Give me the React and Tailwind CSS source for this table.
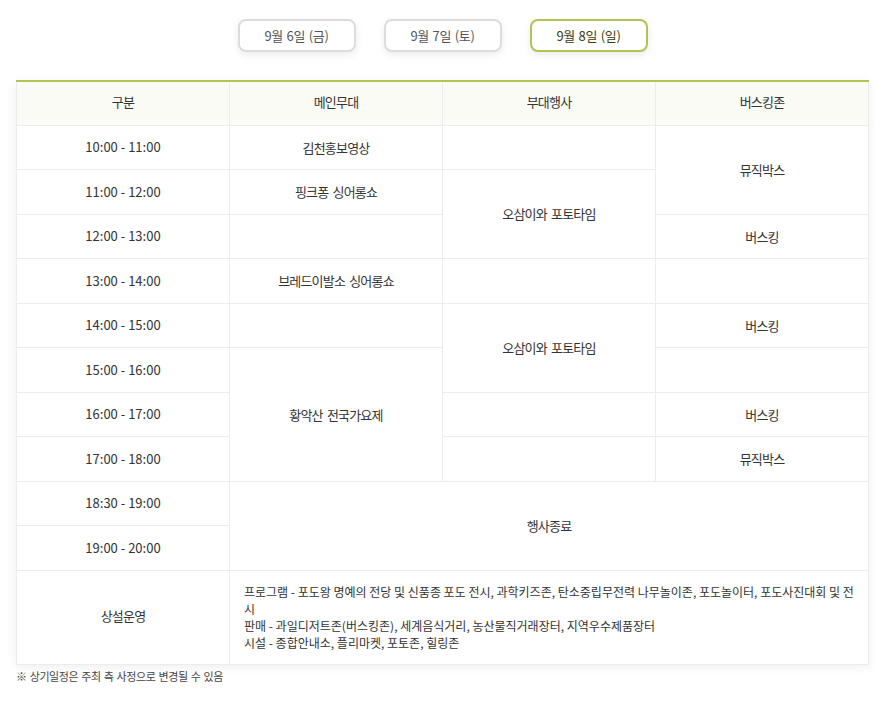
const days = [
  { label: '9월 6일 (금)', active: false },
  { label: '9월 7일 (토)', active: false },
  { label: '9월 8일 (일)', active: true },
];

const td = 'border border-[#ececec] text-center align-middle h-[44.5px] p-0 tracking-[-0.8px] [word-spacing:2px]';
const tt = 'border border-[#ececec] text-center align-middle h-[44.5px] p-0 pb-[1px]';

export default function App() {
  return (
    <div className="w-[888px] min-h-[704px] bg-white font-['Noto_Sans_CJK_KR','Noto_Sans',sans-serif] text-[13px] text-[#333]">
      <div className="flex justify-center gap-7 pt-[19px] pr-[3px]">
        {days.map((d) => (
          <button
            key={d.label}
            className={`w-[118px] h-[33px] rounded-lg border-2 bg-white text-[13px] tracking-[-0.3px] [word-spacing:1px] shadow-[0_3px_8px_rgba(0,0,0,0.08)] ${
              d.active ? 'border-[#b3c253] text-[#3d3d0c]' : 'border-[#dcdcdc] text-[#555]'
            }`}
          >
            {d.label}
          </button>
        ))}
      </div>

      <div className="ml-4 w-[853px] mt-[28px] shadow-[0_2px_10px_rgba(0,0,0,0.07)] border-t-2 border-[#b3c253]">
        <table className="w-full border-collapse table-fixed">
          <thead>
            <tr className="bg-[#fafbf5]">
              {['구분', '메인무대', '부대행사', '버스킹존'].map((h) => (
                <th key={h} className="border-x border-b border-[#ececec] border-t-0 h-[43px] pb-[4px] font-normal text-center tracking-[-0.8px]">
                  {h}
                </th>
              ))}
            </tr>
          </thead>
          <tbody>
            <tr>
              <td className={tt}>10:00 - 11:00</td>
              <td className={td}>김천홍보영상</td>
              <td className={td}></td>
              <td className={td} rowSpan={2}>뮤직박스</td>
            </tr>
            <tr>
              <td className={tt}>11:00 - 12:00</td>
              <td className={td}>핑크퐁 싱어롱쇼</td>
              <td className={td} rowSpan={2}>오삼이와 포토타임</td>
            </tr>
            <tr>
              <td className={tt}>12:00 - 13:00</td>
              <td className={td}></td>
              <td className={td}>버스킹</td>
            </tr>
            <tr>
              <td className={tt}>13:00 - 14:00</td>
              <td className={td}>브레드이발소 싱어롱쇼</td>
              <td className={td}></td>
              <td className={td}></td>
            </tr>
            <tr>
              <td className={tt}>14:00 - 15:00</td>
              <td className={td}></td>
              <td className={td} rowSpan={2}>오삼이와 포토타임</td>
              <td className={td}>버스킹</td>
            </tr>
            <tr>
              <td className={tt}>15:00 - 16:00</td>
              <td className={td} rowSpan={3}>황악산 전국가요제</td>
              <td className={td}></td>
            </tr>
            <tr>
              <td className={tt}>16:00 - 17:00</td>
              <td className={td}></td>
              <td className={td}>버스킹</td>
            </tr>
            <tr>
              <td className={tt}>17:00 - 18:00</td>
              <td className={td}></td>
              <td className={td}>뮤직박스</td>
            </tr>
            <tr>
              <td className={tt}>18:30 - 19:00</td>
              <td className={td} colSpan={3} rowSpan={2}>행사종료</td>
            </tr>
            <tr>
              <td className={tt}>19:00 - 20:00</td>
            </tr>
            <tr>
              <td className="border border-[#ececec] text-center align-middle tracking-[-0.8px] pb-[2px]">상설운영</td>
              <td colSpan={3} className="border border-[#ececec] text-left pl-[14px] pr-[8px] pt-[12px] pb-[13px] text-[12px] leading-[17px]">
                <p>프로그램 - 포도왕 명예의 전당 및 신품종 포도 전시, 과학키즈존, 탄소중립무전력 나무놀이존, 포도놀이터, 포도사진대회 및 전시</p>
                <p>판매 - 과일디저트존(버스킹존), 세계음식거리, 농산물직거래장터, 지역우수제품장터</p>
                <p>시설 - 종합안내소, 플리마켓, 포토존, 힐링존</p>
              </td>
            </tr>
          </tbody>
        </table>
      </div>

      <p className="ml-4 mt-[3px] text-[11px] tracking-[-0.4px] [word-spacing:1px] text-[#444]">※ 상기일정은 주최 측 사정으로 변경될 수 있음</p>
    </div>
  );
}
